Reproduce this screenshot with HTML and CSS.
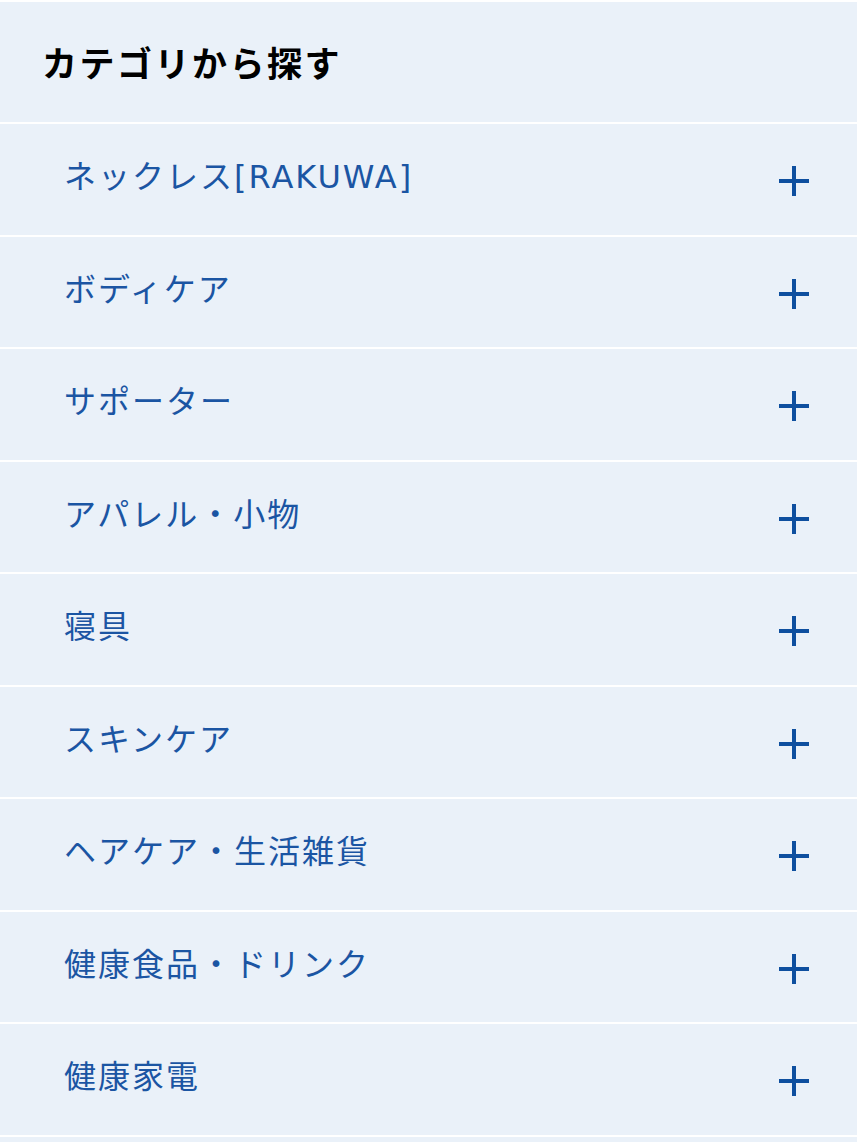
FILE: index.html
```html
<!DOCTYPE html>
<html lang="ja">
<head>
  <meta charset="UTF-8">
  <meta name="viewport" content="width=device-width, initial-scale=1.0">
  <title>カテゴリから探す</title>
  <link rel="stylesheet" href="styles.css">
</head>
<body>
  <div class="category">
    <h2 class="category-title">カテゴリから探す</h2>
    <ul class="category-list">
      <li class="category-item"><span class="category-name">ネックレス[RAKUWA]</span><span class="plus"></span></li>
      <li class="category-item"><span class="category-name">ボディケア</span><span class="plus"></span></li>
      <li class="category-item"><span class="category-name">サポーター</span><span class="plus"></span></li>
      <li class="category-item"><span class="category-name">アパレル・小物</span><span class="plus"></span></li>
      <li class="category-item"><span class="category-name">寝具</span><span class="plus"></span></li>
      <li class="category-item"><span class="category-name">スキンケア</span><span class="plus"></span></li>
      <li class="category-item"><span class="category-name">ヘアケア・生活雑貨</span><span class="plus"></span></li>
      <li class="category-item"><span class="category-name">健康食品・ドリンク</span><span class="plus"></span></li>
      <li class="category-item"><span class="category-name">健康家電</span><span class="plus"></span></li>
    </ul>
  </div>
</body>
</html>
```

FILE: styles.css
```css
html, body {
  margin: 0;
  padding: 0;
  background-color: #eaf1f9;
}
body {
  font-family: "DejaVu Sans", "Noto Sans CJK JP", sans-serif;
  padding-top: 2px;
  background-color: #fff;
  height: 1142px;
  overflow: hidden;
}
.category {
  background-color: #eaf1f9;
  min-height: 1140px;
}
.category-title {
  margin: 0;
  padding: 0 42px;
  height: 120px;
  line-height: 120px;
  font-family: "Noto Sans CJK JP", sans-serif;
  font-size: 35px;
  font-weight: bold;
  letter-spacing: 2.5px;
  color: #000;
}
.category-list {
  list-style: none;
  margin: 0;
  padding: 0;
}
.category-item {
  display: flex;
  align-items: center;
  justify-content: space-between;
  border-top: 2px solid #fff;
  padding: 0 48px 0 64px;
  height: 110.5px;
}
.category-item:last-child {
  border-bottom: 2px solid #fff;
}
.category-name {
  font-size: 32px;
  line-height: 40px;
  letter-spacing: 2px;
  color: #1b55a3;
  margin-bottom: 4px;
}
.plus {
  position: relative;
  width: 30px;
  height: 30px;
  margin-top: 4px;
}
.plus::before,
.plus::after {
  content: "";
  position: absolute;
  background-color: #0e4f9f;
}
.plus::before {
  left: 0;
  top: 13px;
  width: 30px;
  height: 4px;
}
.plus::after {
  left: 13px;
  top: 0;
  width: 4px;
  height: 30px;
}
```
